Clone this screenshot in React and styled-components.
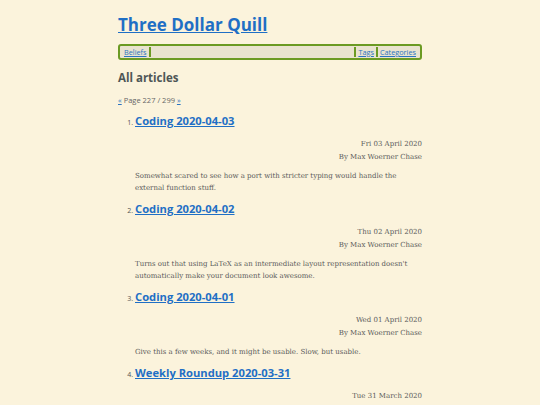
import React from "react";
import styled, { createGlobalStyle } from "styled-components";

const Global = createGlobalStyle`
  html, body {
    margin: 0;
    padding: 0;
    background: #fbf3dc;
  }
  body {
    font-family: "DejaVu Serif", serif;
    color: #555a5a;
  }
`;

const Page = styled.div`
  width: 304px;
  margin: 0 auto;
  padding-top: 14px;
`;

const SiteTitle = styled.h1`
  margin: 0;
  font-family: "Open Sans", sans-serif;
  font-size: 17px;
  line-height: 22px;
  font-weight: 700;
  a {
    color: #1f6fc5;
  }
`;

const Nav = styled.nav`
  margin-top: 8px;
  display: flex;
  align-items: stretch;
  height: 12px;
  border: 2px solid #6b9a23;
  border-radius: 3px;
  background: #e9e3cf;
  padding: 0 2px;
  font-family: "Open Sans", sans-serif;
  font-size: 7.3px;
  line-height: 12px;
`;

const NavLink = styled.a`
  color: #2b74c0;
  padding: 0 2px;
`;

const NavSep = styled.span`
  width: 2px;
  background: #6b9a23;
  margin: 1px 0;
`;

const NavSpacer = styled.span`
  flex: 1;
`;

const SectionTitle = styled.h2`
  margin: 10px 0 0;
  font-family: "Open Sans", sans-serif;
  font-size: 11.5px;
  line-height: 16px;
  font-weight: 700;
  color: #4e5656;
`;

const Pager = styled.div`
  margin-top: 9px;
  font-family: "Open Sans", sans-serif;
  font-size: 7.5px;
  line-height: 10px;
  color: #666;
  a {
    color: #2b74c0;
  }
`;

const List = styled.ol`
  margin: 8px 0 0;
  padding-left: 17px;
`;

const Item = styled.li`
  font-family: "Open Sans", sans-serif;
  font-size: 7px;
  color: #555;
  margin-bottom: 7px;
`;

const ItemTitle = styled.h3`
  display: inline;
  font-family: "Open Sans", sans-serif;
  font-size: 11.2px;
  line-height: 16px;
  font-weight: 700;
  a {
    color: #1f6fc5;
  }
`;

const Meta = styled.div`
  margin-top: 9px;
  text-align: right;
  font-family: "DejaVu Serif", serif;
  font-size: 7px;
  line-height: 13px;
  color: #5a5a5a;
`;

const Summary = styled.p`
  margin: 6px 0 0;
  font-family: "DejaVu Serif", serif;
  font-size: 7px;
  line-height: 12px;
  color: #5a5a5a;
`;

const articles = [
  {
    title: "Coding 2020-04-03",
    date: "Fri 03 April 2020",
    summary:
      "Somewhat scared to see how a port with stricter typing would handle the external function stuff.",
  },
  {
    title: "Coding 2020-04-02",
    date: "Thu 02 April 2020",
    summary:
      "Turns out that using LaTeX as an intermediate layout representation doesn't automatically make your document look awesome.",
  },
  {
    title: "Coding 2020-04-01",
    date: "Wed 01 April 2020",
    summary: "Give this a few weeks, and it might be usable. Slow, but usable.",
  },
  {
    title: "Weekly Roundup 2020-03-31",
    date: "Tue 31 March 2020",
    summary: "",
  },
];

export default function App() {
  return (
    <>
      <Global />
      <Page>
        <SiteTitle>
          <a href="#">Three Dollar Quill</a>
        </SiteTitle>
        <Nav>
          <NavLink href="#">Beliefs</NavLink>
          <NavSep />
          <NavSpacer />
          <NavSep />
          <NavLink href="#">Tags</NavLink>
          <NavSep />
          <NavLink href="#">Categories</NavLink>
        </Nav>
        <SectionTitle>All articles</SectionTitle>
        <Pager>
          <a href="#">«</a> Page 227 / 299 <a href="#">»</a>
        </Pager>
        <List>
          {articles.map((a) => (
            <Item key={a.title}>
              <ItemTitle>
                <a href="#">{a.title}</a>
              </ItemTitle>
              <Meta>
                {a.date}
                <br />
                By Max Woerner Chase
              </Meta>
              {a.summary && <Summary>{a.summary}</Summary>}
            </Item>
          ))}
        </List>
      </Page>
    </>
  );
}
